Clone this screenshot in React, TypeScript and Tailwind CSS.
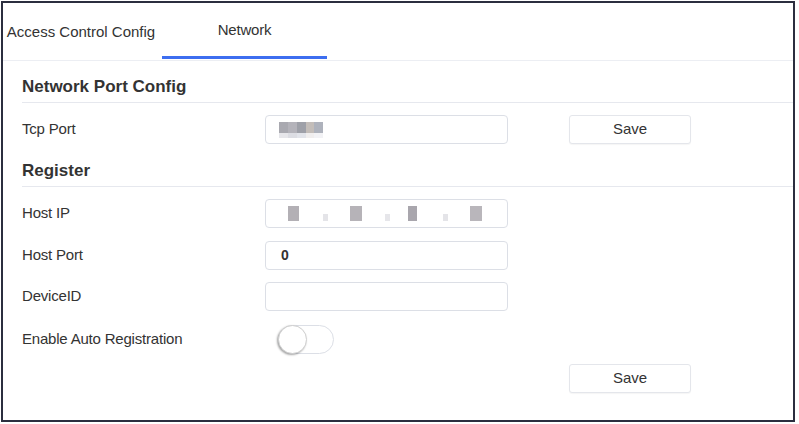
import React from "react";

const font = { fontFamily: '"Liberation Sans", Arial, sans-serif' };

function Label({ children }: { children: React.ReactNode }) {
  return <div className="w-[243px] shrink-0 text-[15px] text-[#333] tracking-[-0.2px]">{children}</div>;
}

function Input({ children }: { children?: React.ReactNode }) {
  return (
    <div className="w-[243px] h-[29px] shrink-0 rounded-[4px] border border-[#dcdfe6] bg-white flex items-center">
      {children}
    </div>
  );
}

function SaveButton() {
  return (
    <button className="w-[122px] h-[29px] rounded-[3px] border border-[#e4e6eb] bg-white text-[15px] text-[#333] flex items-center justify-center shadow-[0_1px_1px_rgba(0,0,0,0.04)]">
      Save
    </button>
  );
}

function Section({ title, top }: { title: string; top: "first" | "next" }) {
  return (
    <div className={(top === "first" ? "pt-[16px]" : "pt-[17px]") + " pb-[5px] border-b border-[#e6e8ee]"}>
      <div className="h-[20px] leading-[20px] text-[17px] font-bold text-[#333]">{title}</div>
    </div>
  );
}

export default function App() {
  return (
    <div className="w-[799px] h-[424px] bg-white" style={font}>
      <div className="ml-[1px] mt-[1px] w-[794px] h-[421px] border-2 border-[#2b2e3f] bg-white flex flex-col">
        {/* tabs */}
        <div className="h-[58px] shrink-0 border-b border-[#eceef3] flex">
          <div className="w-[156px] h-full flex items-center justify-center pt-[1px] text-[15px] text-[#333]">
            Access Control Config
          </div>
          <div className="ml-[3px] w-[165px] h-full flex flex-col">
            <div className="flex-1 flex items-center justify-center pt-[1px] text-[15px] text-[#333] tracking-[-0.2px]">
              Network
            </div>
            <div className="h-[3px] bg-[#3d6ef0] mb-[1px]" />
          </div>
        </div>

        <div className="pl-[19px]">
          <Section title="Network Port Config" top="first" />

          <div className="mt-[12px] flex items-center">
            <Label>Tcp Port</Label>
            <Input>
              <div className="ml-[13px] flex flex-col blur-[0.5px]">
                <div className="flex">
                  <div className="w-[9px] h-[11px] bg-[#a9a9b0]" />
                  <div className="w-[9px] h-[11px] bg-[#b4b3ba]" />
                  <div className="w-[9px] h-[11px] bg-[#9ea0a8]" />
                  <div className="w-[8px] h-[11px] bg-[#c3bdb9]" />
                  <div className="w-[9px] h-[11px] bg-[#aeb2bc]" />
                </div>
                <div className="flex">
                  <div className="w-[9px] h-[5px] bg-[#e6e6ea]" />
                  <div className="w-[9px] h-[5px] bg-[#dcdde3]" />
                  <div className="w-[9px] h-[5px] bg-[#e2e4ea]" />
                  <div className="w-[8px] h-[5px] bg-[#f0eeee]" />
                  <div className="w-[9px] h-[5px] bg-[#f2f2f5]" />
                </div>
              </div>
            </Input>
            <div className="ml-[61px]">
              <SaveButton />
            </div>
          </div>

          <Section title="Register" top="next" />

          <div className="mt-[12px] flex items-center">
            <Label>Host IP</Label>
            <Input>
              <div className="flex items-center blur-[0.6px]">
                <div className="ml-[22px] w-[11px] h-[15px] bg-[#b3b0b5]" />
                <div className="ml-[24px] mt-[8px] w-[5px] h-[7px] bg-[#e4e4e8]" />
                <div className="ml-[22px] w-[12px] h-[15px] bg-[#b6b3b8]" />
                <div className="ml-[23px] mt-[8px] w-[5px] h-[7px] bg-[#e6e6ea]" />
                <div className="ml-[18px] w-[9px] h-[15px] bg-[#a9a6ad]" />
                <div className="ml-[26px] mt-[8px] w-[5px] h-[7px] bg-[#e4e4e8]" />
                <div className="ml-[22px] w-[12px] h-[15px] bg-[#b9b6bb]" />
              </div>
            </Input>
          </div>

          <div className="mt-[13px] flex items-center">
            <Label>Host Port</Label>
            <Input>
              <span className="ml-[15px] text-[14px] font-bold text-[#333]">0</span>
            </Input>
          </div>

          <div className="mt-[12px] flex items-center">
            <Label>DeviceID</Label>
            <Input />
          </div>

          <div className="mt-[14px] flex items-center">
            <Label>Enable Auto Registration</Label>
            <div className="ml-[13px] w-[56px] h-[29px] rounded-full border border-[#dcdfe6] bg-white flex items-center">
              <div className="w-[29px] h-[29px] -ml-[1px] rounded-full bg-white border border-[#cfcfcf] shadow-[-1px_1px_2px_rgba(0,0,0,0.35)]" />
            </div>
          </div>

          <div className="mt-[10px] flex">
            <div className="ml-[547px]">
              <SaveButton />
            </div>
          </div>
        </div>
      </div>
    </div>
  );
}
